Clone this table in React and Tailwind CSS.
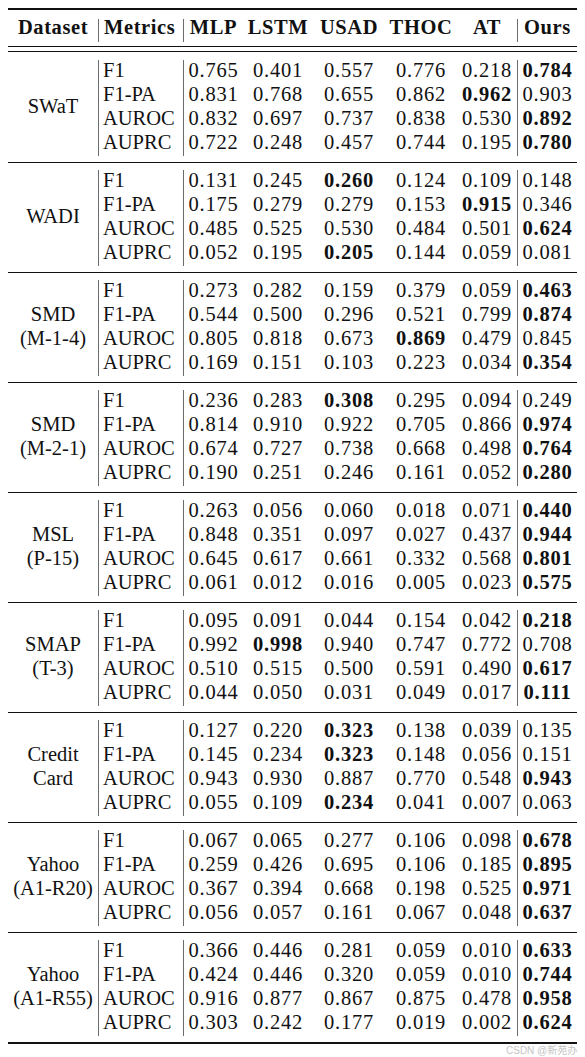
const methods = ['MLP', 'LSTM', 'USAD', 'THOC', 'AT'];

// a leading '*' marks a bold (best) value
const blocks = [
  {
    name: ['SWaT'],
    rows: [
      ['F1', '0.765', '0.401', '0.557', '0.776', '0.218', '*0.784'],
      ['F1-PA', '0.831', '0.768', '0.655', '0.862', '*0.962', '0.903'],
      ['AUROC', '0.832', '0.697', '0.737', '0.838', '0.530', '*0.892'],
      ['AUPRC', '0.722', '0.248', '0.457', '0.744', '0.195', '*0.780'],
    ],
  },
  {
    name: ['WADI'],
    rows: [
      ['F1', '0.131', '0.245', '*0.260', '0.124', '0.109', '0.148'],
      ['F1-PA', '0.175', '0.279', '0.279', '0.153', '*0.915', '0.346'],
      ['AUROC', '0.485', '0.525', '0.530', '0.484', '0.501', '*0.624'],
      ['AUPRC', '0.052', '0.195', '*0.205', '0.144', '0.059', '0.081'],
    ],
  },
  {
    name: ['SMD', '(M-1-4)'],
    rows: [
      ['F1', '0.273', '0.282', '0.159', '0.379', '0.059', '*0.463'],
      ['F1-PA', '0.544', '0.500', '0.296', '0.521', '0.799', '*0.874'],
      ['AUROC', '0.805', '0.818', '0.673', '*0.869', '0.479', '0.845'],
      ['AUPRC', '0.169', '0.151', '0.103', '0.223', '0.034', '*0.354'],
    ],
  },
  {
    name: ['SMD', '(M-2-1)'],
    rows: [
      ['F1', '0.236', '0.283', '*0.308', '0.295', '0.094', '0.249'],
      ['F1-PA', '0.814', '0.910', '0.922', '0.705', '0.866', '*0.974'],
      ['AUROC', '0.674', '0.727', '0.738', '0.668', '0.498', '*0.764'],
      ['AUPRC', '0.190', '0.251', '0.246', '0.161', '0.052', '*0.280'],
    ],
  },
  {
    name: ['MSL', '(P-15)'],
    rows: [
      ['F1', '0.263', '0.056', '0.060', '0.018', '0.071', '*0.440'],
      ['F1-PA', '0.848', '0.351', '0.097', '0.027', '0.437', '*0.944'],
      ['AUROC', '0.645', '0.617', '0.661', '0.332', '0.568', '*0.801'],
      ['AUPRC', '0.061', '0.012', '0.016', '0.005', '0.023', '*0.575'],
    ],
  },
  {
    name: ['SMAP', '(T-3)'],
    rows: [
      ['F1', '0.095', '0.091', '0.044', '0.154', '0.042', '*0.218'],
      ['F1-PA', '0.992', '*0.998', '0.940', '0.747', '0.772', '0.708'],
      ['AUROC', '0.510', '0.515', '0.500', '0.591', '0.490', '*0.617'],
      ['AUPRC', '0.044', '0.050', '0.031', '0.049', '0.017', '*0.111'],
    ],
  },
  {
    name: ['Credit', 'Card'],
    rows: [
      ['F1', '0.127', '0.220', '*0.323', '0.138', '0.039', '0.135'],
      ['F1-PA', '0.145', '0.234', '*0.323', '0.148', '0.056', '0.151'],
      ['AUROC', '0.943', '0.930', '0.887', '0.770', '0.548', '*0.943'],
      ['AUPRC', '0.055', '0.109', '*0.234', '0.041', '0.007', '0.063'],
    ],
  },
  {
    name: ['Yahoo', '(A1-R20)'],
    rows: [
      ['F1', '0.067', '0.065', '0.277', '0.106', '0.098', '*0.678'],
      ['F1-PA', '0.259', '0.426', '0.695', '0.106', '0.185', '*0.895'],
      ['AUROC', '0.367', '0.394', '0.668', '0.198', '0.525', '*0.971'],
      ['AUPRC', '0.056', '0.057', '0.161', '0.067', '0.048', '*0.637'],
    ],
  },
  {
    name: ['Yahoo', '(A1-R55)'],
    rows: [
      ['F1', '0.366', '0.446', '0.281', '0.059', '0.010', '*0.633'],
      ['F1-PA', '0.424', '0.446', '0.320', '0.059', '0.010', '*0.744'],
      ['AUROC', '0.916', '0.877', '0.867', '0.875', '0.478', '*0.958'],
      ['AUPRC', '0.303', '0.242', '0.177', '0.019', '0.002', '*0.624'],
    ],
  },
];

const grid = 'grid grid-cols-[90px_85px_60px_70px_72px_72px_60px_60px]';
const vline = 'border-l border-[#6b6b6b]';

function Num({ value, className }) {
  const bold = value.startsWith('*');
  return (
    <div className={`h-[24px] leading-[20px] text-center tracking-[0.8px] ${bold ? 'font-bold' : ''} ${className || ''}`}>
      {bold ? value.slice(1) : value}
    </div>
  );
}

export default function App() {
  return (
    <main className="w-[585px] min-h-[1057px] bg-white pt-[8px] font-['Liberation_Serif',serif] text-[20.5px] text-[#111] overflow-hidden">
      <div className="w-[569px] ml-[8px]">
        {/* TOP RULE + HEADER */}
        <div className="border-t-2 border-[#111] pt-[9px]">
          <div className={`${grid} h-[23px] leading-[16px] font-bold tracking-[0.6px]`}>
            <div className="text-center">Dataset</div>
            <div className={`${vline} pl-[5px]`}>Metrics</div>
            {methods.map((m, i) => (
              <div key={m} className={`text-center ${i === 0 ? vline : ''}`}>
                {m}
              </div>
            ))}
            <div className={`${vline} text-center`}>Ours</div>
          </div>
        </div>
        <div className="h-[4px]" />
        <div className="border-t border-[#111] h-[5px]" />
        <div className="border-t border-[#111]" />

        {/* BLOCKS */}
        {blocks.map((block, bi) => (
          <div
            key={bi}
            className={`${bi === 0 ? 'pt-[8px]' : 'border-t border-[#111] pt-[7px]'} pb-[6px]`}
          >
            <div className={grid}>
              <div className="row-span-4 flex flex-col justify-center items-center">
                {block.name.map((line) => (
                  <div key={line} className="h-[24px] leading-[20px] whitespace-nowrap">
                    {line}
                  </div>
                ))}
              </div>
              {block.rows.map((row) => [
                <div key={row[0]} className={`${vline} h-[24px] leading-[20px] pl-[4px]`}>
                  {row[0]}
                </div>,
                ...row.slice(1).map((v, ci) => (
                  <Num
                    key={row[0] + ci}
                    value={v}
                    className={ci === 0 || ci === 5 ? vline : ''}
                  />
                )),
              ])}
            </div>
          </div>
        ))}

        {/* BOTTOM RULE */}
        <div className="border-t-2 border-[#111]" />
      </div>
      <div className="ml-[506px] mt-[1px] whitespace-nowrap font-['Liberation_Sans','Noto_Sans_CJK_SC',sans-serif] text-[10px] leading-[12px] text-[#c4c4c4]">
        CSDN @新苑办
      </div>
    </main>
  );
}
